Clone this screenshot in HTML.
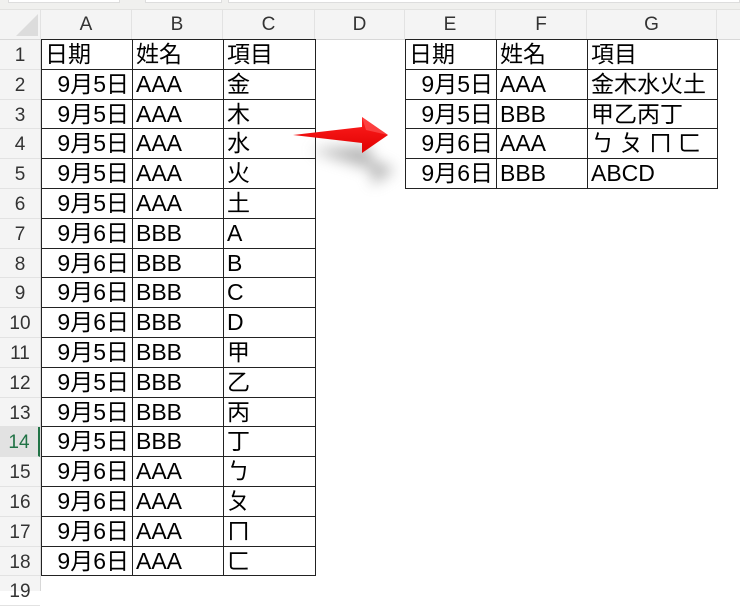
<!DOCTYPE html>
<html><head><meta charset="utf-8"><style>
body{margin:0;width:740px;height:591px;overflow:hidden;background:#fff;font-family:"Liberation Sans","Noto Sans CJK TC",sans-serif;position:relative}
.top{position:absolute;left:0;top:0;width:740px;height:9px;background:#f0f0ee;border-bottom:1px solid #e2e2e0}
.top i{position:absolute;top:0;height:2px;background:#fff;border:1px solid #ddd;border-top:none}
.ch{position:absolute;top:10px;height:29px;background:#f4f4f4;border-bottom:1px solid #d8d8d8}
.ch div{position:absolute;top:0;height:29px;line-height:30px;text-align:center;font-size:19px;color:#333;border-right:1px solid #e2e2e2;box-sizing:border-box}
.rh{position:absolute;left:0;width:41px;background:#f4f4f4;border-right:1px solid #d8d8d8;box-sizing:border-box}
.rh div{position:absolute;left:0;width:40px;height:29.8px;line-height:31px;text-align:center;font-size:19px;color:#333;border-bottom:1px solid #e2e2e2;box-sizing:border-box}
.g{position:absolute;display:grid;grid-auto-rows:29.8px;border-left:1.5px solid #222;border-top:1.5px solid #222;font-size:23px;color:#000}
.g div{border-right:1.5px solid #222;border-bottom:1.5px solid #222;padding:0 3px;line-height:29px;white-space:nowrap;overflow:hidden;box-sizing:border-box}
.g div.d{text-align:right;padding-right:3px}
</style></head><body>
<div class="top"><i style="left:8px;width:110px"></i><i style="left:145px;width:75px"></i><i style="left:228px;width:510px"></i></div>
<div class="ch" style="left:0;width:740px">
<div style="left:0;width:41px;background:#f4f4f4"><svg width="41" height="29" style="position:absolute;left:0;top:0"><polygon points="38,4 38,26 16,26" fill="#dcdcdc"/></svg></div>
<div style="left:41px;width:91px">A</div><div style="left:132px;width:91px">B</div><div style="left:223px;width:92px">C</div><div style="left:315px;width:90px">D</div><div style="left:405px;width:91px">E</div><div style="left:496px;width:91px">F</div><div style="left:587px;width:130px">G</div>
</div>
<div class="rh" style="top:40px;height:551px">
<div style="top:0">1</div>
<div style="top:29.8px">2</div>
<div style="top:59.6px">3</div>
<div style="top:89.4px">4</div>
<div style="top:119.2px">5</div>
<div style="top:149px">6</div>
<div style="top:178.8px">7</div>
<div style="top:208.6px">8</div>
<div style="top:238.4px">9</div>
<div style="top:268.2px">10</div>
<div style="top:298px">11</div>
<div style="top:327.8px">12</div>
<div style="top:357.6px">13</div>
<div style="top:387.4px;color:#217346;background:#e2e2e2;border-right:2px solid #217346">14</div>
<div style="top:417.2px">15</div>
<div style="top:447px">16</div>
<div style="top:476.8px">17</div>
<div style="top:506.6px">18</div>
<div style="top:536.4px">19</div>
</div>
<div class="g" style="left:41px;top:39px;grid-template-columns:91px 91px 92px">
<div>日期</div><div>姓名</div><div>項目</div>
<div class="d">9月5日</div><div>AAA</div><div>金</div>
<div class="d">9月5日</div><div>AAA</div><div>木</div>
<div class="d">9月5日</div><div>AAA</div><div>水</div>
<div class="d">9月5日</div><div>AAA</div><div>火</div>
<div class="d">9月5日</div><div>AAA</div><div>土</div>
<div class="d">9月6日</div><div>BBB</div><div>A</div>
<div class="d">9月6日</div><div>BBB</div><div>B</div>
<div class="d">9月6日</div><div>BBB</div><div>C</div>
<div class="d">9月6日</div><div>BBB</div><div>D</div>
<div class="d">9月5日</div><div>BBB</div><div>甲</div>
<div class="d">9月5日</div><div>BBB</div><div>乙</div>
<div class="d">9月5日</div><div>BBB</div><div>丙</div>
<div class="d">9月5日</div><div>BBB</div><div>丁</div>
<div class="d">9月6日</div><div>AAA</div><div>ㄅ</div>
<div class="d">9月6日</div><div>AAA</div><div>ㄆ</div>
<div class="d">9月6日</div><div>AAA</div><div>ㄇ</div>
<div class="d">9月6日</div><div>AAA</div><div>ㄈ</div>
</div>
<div class="g" style="left:405px;top:39px;grid-template-columns:91px 91px 130px">
<div>日期</div><div>姓名</div><div>項目</div>
<div class="d">9月5日</div><div>AAA</div><div>金木水火土</div>
<div class="d">9月5日</div><div>BBB</div><div>甲乙丙丁</div>
<div class="d">9月6日</div><div>AAA</div><div style="letter-spacing:6px">ㄅㄆㄇㄈ</div>
<div class="d">9月6日</div><div>BBB</div><div>ABCD</div>
</div>
<svg width="740" height="591" style="position:absolute;left:0;top:0">
<defs><filter id="b" x="-50%" y="-50%" width="200%" height="200%"><feGaussianBlur stdDeviation="7"/></filter>
<linearGradient id="gr" x1="0" y1="0" x2="0" y2="1"><stop offset="0" stop-color="#ff2020"/><stop offset="1" stop-color="#e00000"/></linearGradient></defs>
<polygon points="310,150 370,145 370,158 395,170 372,185 372,170" fill="#888" opacity="0.6" filter="url(#b)"/>
<polygon points="293,135 362,127 362,117 388,135 362,153 362,143" fill="url(#gr)"/>
<polygon points="362,117 388,135 366,130" fill="#ff5a5a" opacity="0.6"/>
</svg>
</body></html>
